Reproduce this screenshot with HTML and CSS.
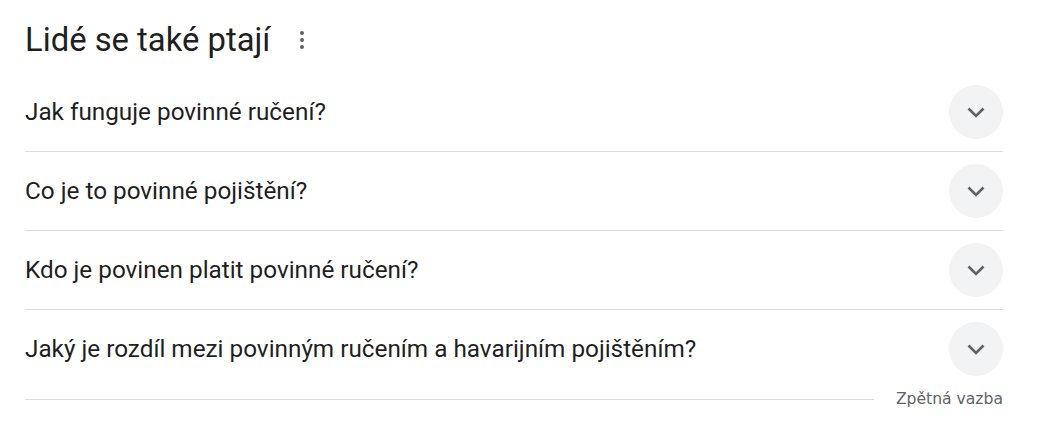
FILE: index.html
```html
<!DOCTYPE html>
<html lang="cs">
<head>
<meta charset="utf-8">
<link rel="stylesheet" href="styles.css">
</head>
<body>
<div class="paa">
  <div class="paa-header">
    <h2 class="paa-title">Lidé se také ptají</h2>
    <span class="paa-menu" aria-label="Další možnosti"><i></i><i></i><i></i></span>
  </div>
  <div class="paa-row">
    <span class="paa-q">Jak funguje povinné ručení?</span>
    <span class="paa-btn"><svg viewBox="0 0 24 24" width="24" height="24"><path d="M4.5 8.5 12 16l7.5-7.5" fill="none" stroke="#5f6368" stroke-width="2.6"/></svg></span>
  </div>
  <div class="paa-row">
    <span class="paa-q">Co je to povinné pojištění?</span>
    <span class="paa-btn"><svg viewBox="0 0 24 24" width="24" height="24"><path d="M4.5 8.5 12 16l7.5-7.5" fill="none" stroke="#5f6368" stroke-width="2.6"/></svg></span>
  </div>
  <div class="paa-row">
    <span class="paa-q">Kdo je povinen platit povinné ručení?</span>
    <span class="paa-btn"><svg viewBox="0 0 24 24" width="24" height="24"><path d="M4.5 8.5 12 16l7.5-7.5" fill="none" stroke="#5f6368" stroke-width="2.6"/></svg></span>
  </div>
  <div class="paa-row paa-row-last">
    <span class="paa-q">Jaký je rozdíl mezi povinným ručením a havarijním pojištěním?</span>
    <span class="paa-btn"><svg viewBox="0 0 24 24" width="24" height="24"><path d="M4.5 8.5 12 16l7.5-7.5" fill="none" stroke="#5f6368" stroke-width="2.6"/></svg></span>
  </div>
  <div class="paa-footer">
    <span class="paa-line"></span>
    <span class="paa-feedback">Zpětná vazba</span>
  </div>
</div>
</body>
</html>
```
FILE: styles.css
```css
html, body {
  margin: 0;
  padding: 0;
  background: #fff;
}

.paa {
  width: 978px;
  margin-left: 25px;
  font-family: Roboto, "Liberation Sans", sans-serif;
  color: #1f1f1f;
}

.paa-header {
  height: 73px;
  display: flex;
  align-items: center;
  gap: 30px;
}

.paa-title {
  margin: 0;
  font-size: 32.8px;
  font-weight: 400;
  line-height: 38px;
  padding-top: 7px;
}

.paa-menu {
  display: flex;
  flex-direction: column;
  gap: 3px;
  padding-top: 6px;
}

.paa-menu i {
  display: block;
  width: 4px;
  height: 4px;
  border-radius: 50%;
  background: #5f6368;
}

.paa-row {
  height: 78px;
  border-bottom: 1px solid #dadce0;
  display: flex;
  align-items: center;
  justify-content: space-between;
}

.paa-row:first-of-type {
  margin-top: 1px;
}

.paa-row-last {
  border-bottom: none;
}

.paa-q {
  font-size: 24.3px;
  line-height: 30px;
}

.paa-btn {
  width: 54px;
  height: 54px;
  border-radius: 50%;
  background: #f1f3f4;
  display: flex;
  align-items: center;
  justify-content: center;
}

.paa-footer {
  display: flex;
  align-items: center;
  gap: 22px;
  height: 22px;
}

.paa-line {
  flex: 1;
  height: 1px;
  background: #dadce0;
}

.paa-feedback {
  font-family: "DejaVu Sans", sans-serif;
  font-size: 15.6px;
  color: #5f6368;
}
```
